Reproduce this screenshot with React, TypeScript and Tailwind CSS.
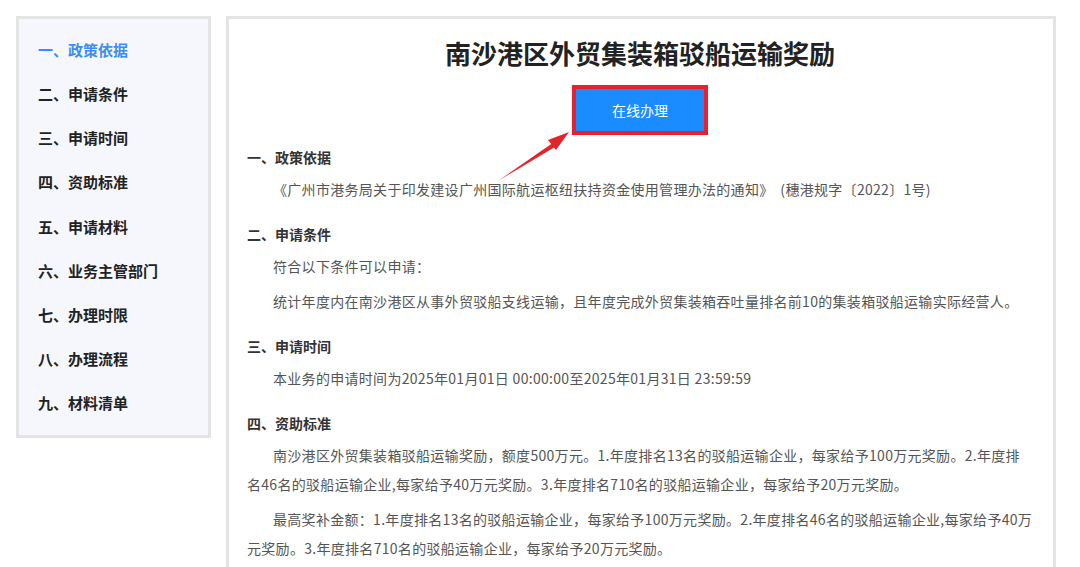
const navItems = [
  "一、政策依据",
  "二、申请条件",
  "三、申请时间",
  "四、资助标准",
  "五、申请材料",
  "六、业务主管部门",
  "七、办理时限",
  "八、办理流程",
  "九、材料清单",
];

const sections: { title: string; paras: string[] }[] = [
  {
    title: "一、政策依据",
    paras: [
      "《广州市港务局关于印发建设广州国际航运枢纽扶持资金使用管理办法的通知》\u00a0\u00a0(穗港规字〔2022〕1号)",
    ],
  },
  {
    title: "二、申请条件",
    paras: [
      "符合以下条件可以申请：",
      "统计年度内在南沙港区从事外贸驳船支线运输，且年度完成外贸集装箱吞吐量排名前10的集装箱驳船运输实际经营人。",
    ],
  },
  {
    title: "三、申请时间",
    paras: ["本业务的申请时间为2025年01月01日 00:00:00至2025年01月31日 23:59:59"],
  },
  {
    title: "四、资助标准",
    paras: [
      "南沙港区外贸集装箱驳船运输奖励，额度500万元。1.年度排名13名的驳船运输企业，每家给予100万元奖励。2.年度排名46名的驳船运输企业,每家给予40万元奖励。3.年度排名710名的驳船运输企业，每家给予20万元奖励。",
      "最高奖补金额：1.年度排名13名的驳船运输企业，每家给予100万元奖励。2.年度排名46名的驳船运输企业,每家给予40万元奖励。3.年度排名710名的驳船运输企业，每家给予20万元奖励。",
    ],
  },
];

export default function App() {
  return (
    <div
      className="flex h-[567px] w-[1080px] items-start gap-[15px] overflow-hidden bg-white pl-4 pt-4"
      style={{ fontFamily: '"Microsoft YaHei", "Noto Sans CJK SC", sans-serif' }}
    >
      <aside className="w-[195px] shrink-0 border-[3px] border-[#e4e4e4] bg-[#f5f7fd] py-[9px] pl-[19px]">
        {navItems.map((item, i) => (
          <div
            key={item}
            className={
              "flex h-[44.2px] items-center text-[15px] font-bold " +
              (i === 0 ? "text-[#3d8ef0]" : "text-[#222]")
            }
          >
            {item}
          </div>
        ))}
      </aside>

      <main className="relative h-[600px] w-[830px] shrink-0 border-[3px] border-[#e4e4e4] bg-white pl-[18px] pr-[20px] pt-[17px]">
        <h1 className="text-center text-[26px] font-bold leading-[34px] text-[#222]">
          南沙港区外贸集装箱驳船运输奖励
        </h1>
        <div className="mt-[15px] flex justify-center">
          <button className="h-[50px] w-[136px] border-[4px] border-[#e8202a] bg-[#1a8cff] text-[14px] text-white">
            在线办理
          </button>
        </div>

        {/* red pointer arrow toward the button */}
        <svg
          className="pointer-events-none absolute left-[266px] top-[104px]"
          width="90"
          height="65"
          viewBox="0 0 90 65"
        >
          <path d="M3 58 L62 17 L65 21 Z" fill="#e4242b" />
          <polygon points="74,9 53,17 61,27" fill="#e4242b" />
        </svg>

        <div className="mt-[10px]">
          {sections.map((s, i) => (
            <section key={s.title} className={i === 0 ? "" : "mt-[18px]"}>
              <h2 className="text-[14px] font-bold leading-[24px] text-[#333]">{s.title}</h2>
              {s.paras.map((p) => (
                <p
                  key={p}
                  className="mt-[6px] indent-[26px] text-[14px] leading-[29px] tracking-[0.3px] text-[#555]"
                >
                  {p}
                </p>
              ))}
            </section>
          ))}
        </div>
      </main>
    </div>
  );
}
